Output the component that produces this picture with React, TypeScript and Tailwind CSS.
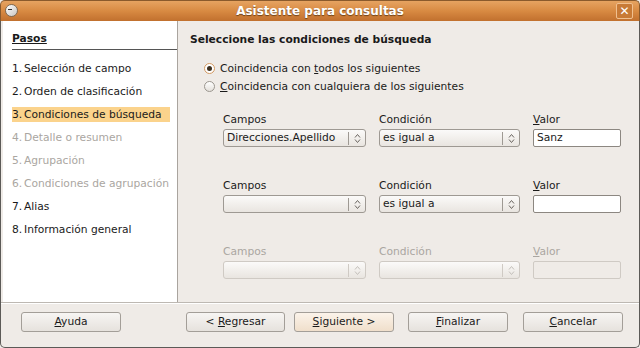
import React from "react";

const pasos = [
  { n: "1.", label: "Selección de campo", state: "normal" },
  { n: "2.", label: "Orden de clasificación", state: "normal" },
  { n: "3.", label: "Condiciones de búsqueda", state: "active" },
  { n: "4.", label: "Detalle o resumen", state: "disabled" },
  { n: "5.", label: "Agrupación", state: "disabled" },
  { n: "6.", label: "Condiciones de agrupación", state: "disabled" },
  { n: "7.", label: "Alias", state: "normal" },
  { n: "8.", label: "Información general", state: "normal" },
];

const condiciones = [
  { campo: "Direcciones.Apellido", cond: "es igual a", valor: "Sanz", disabled: false },
  { campo: "", cond: "es igual a", valor: "", disabled: false },
  { campo: "", cond: "", valor: "", disabled: true },
];

const Chevrons = ({ disabled }: { disabled?: boolean }) => (
  <svg width="7" height="11" viewBox="0 0 7 11" fill="none">
    <path
      d="M1 4.5 L3.5 1.5 L6 4.5 M1 6.5 L3.5 9.5 L6 6.5"
      stroke={disabled ? "#c4c0bb" : "#6b6661"}
      strokeWidth="1"
    />
  </svg>
);

const Select = ({ value, width, disabled }: { value: string; width: string; disabled?: boolean }) => (
  <div
    className={`${width} flex h-[18px] items-center rounded-[3px] border bg-gradient-to-b from-[#fbfaf9] to-[#e9e5e0] ${
      disabled ? "border-[#cfcac4]" : "border-[#9e9993]"
    }`}
  >
    <span className="flex-1 overflow-hidden whitespace-nowrap pl-[3px] leading-[16px]">{value}</span>
    <span className={`h-[13px] w-px ${disabled ? "bg-[#cfcac4]" : "bg-[#9e9993]"}`} />
    <span className="flex w-[16px] justify-center">
      <Chevrons disabled={disabled} />
    </span>
  </div>
);

const Button = ({ children, hot, w = "w-[100px]" }: { children: React.ReactNode; hot?: boolean; w?: string }) => (
  <button
    className={`${w} flex h-[20px] shrink-0 items-center justify-center rounded-[3px] border border-[#a39e98] bg-gradient-to-b text-[#1a1a1a] ${
      hot ? "from-[#fbf3ea] to-[#f0dfcb]" : "from-[#f7f5f3] to-[#e6e2dd]"
    }`}
  >
    <span className="whitespace-pre leading-[16px]">{children}</span>
  </button>
);

export default function App() {
  return (
    <div
      className="flex h-[348px] w-[640px] flex-col overflow-hidden bg-[#efebe7] text-[10.7px] text-[#1a1a1a]"
      style={{ fontFamily: '"DejaVu Sans", Verdana, sans-serif' }}
    >
      {/* barra de título */}
      <div className="relative flex h-[21px] shrink-0 items-center justify-center rounded-t-[5px] border border-b-0 border-[#8a5a2c] bg-gradient-to-b from-[#e6a361] via-[#d88a42] to-[#c1702e]">
        <div className="absolute left-[4px] top-[3px] h-[13px] w-[13px] rounded-full border border-[#7d6a55] bg-gradient-to-br from-white to-[#c9c5c0]">
          <div className="ml-[2px] mt-[4px] h-px w-[4px] bg-[#333]" />
        </div>
        <span className="text-[12px] font-bold text-white [text-shadow:0_1px_1px_#6e4218]">
          Asistente para consultas
        </span>
        <div className="absolute right-[6px] top-[2px] flex h-[16px] w-[17px] items-center justify-center rounded-[2px] border border-[#f0c090] bg-[#c87a36]">
          <span className="text-[12px] font-bold leading-none text-white">✕</span>
        </div>
      </div>

      <div className="flex flex-1 flex-col rounded-b-[5px] border border-t-0 border-[#5c5a57]">
        <div className="flex h-[282px] shrink-0 border-b border-[#bdb8b2] pl-[2px]">
          {/* Pasos */}
          <div className="w-[175px] shrink-0 border-r border-[#a9a49e] bg-white">
            <div className="ml-[9px] mt-[10px] border-b border-[#555] pb-[2px]">
              <span className="font-bold underline">Pasos</span>
            </div>
            <div className="ml-[9px] mt-[11px] flex flex-col">
              {pasos.map((p) => (
                <div
                  key={p.n}
                  className={`mb-[8px] flex h-[15px] w-[158px] items-center whitespace-nowrap ${
                    p.state === "active" ? "bg-[#fbd38c]" : ""
                  } ${p.state === "disabled" ? "text-[#aaa6a1]" : ""}`}
                >
                  <span className="w-[12px] shrink-0">{p.n}</span>
                  <span>{p.label}</span>
                </div>
              ))}
            </div>
          </div>

          {/* Condiciones */}
          <div className="flex-1 pl-[12px]">
            <div className="mt-[11px] font-bold">Seleccione las condiciones de búsqueda</div>
            <div className="ml-[14px] mt-[14px] flex flex-col gap-[5px]">
              <label className="flex h-[13px] items-center gap-[5px]">
                <span className="flex h-[11px] w-[11px] items-center justify-center rounded-full border border-[#d49a62] bg-white">
                  <span className="h-[5px] w-[5px] rounded-full bg-[#3d3020]" />
                </span>
                <span>
                  Coincidencia con <span className="underline">t</span>odos los siguientes
                </span>
              </label>
              <label className="flex h-[13px] items-center gap-[5px]">
                <span className="h-[11px] w-[11px] rounded-full border border-[#9b968f] bg-gradient-to-b from-white to-[#e4e0db]" />
                <span>
                  <span className="underline">C</span>oincidencia con cualquiera de los siguientes
                </span>
              </label>
            </div>

            <div className="ml-[33px] mt-[19px] flex flex-col gap-[31px]">
              {condiciones.map((c, i) => (
                <div key={i} className={`flex gap-[13px] ${c.disabled ? "text-[#aaa6a1]" : ""}`}>
                  <div className="flex flex-col gap-[3px]">
                    <span className="h-[14px]">Campos</span>
                    <Select value={c.campo} width="w-[143px]" disabled={c.disabled} />
                  </div>
                  <div className="flex flex-col gap-[3px]">
                    <span className="h-[14px]">Condición</span>
                    <Select value={c.cond} width="w-[141px]" disabled={c.disabled} />
                  </div>
                  <div className="flex flex-col gap-[3px]">
                    <span className="h-[14px]">
                      <span className="underline">V</span>alor
                    </span>
                    <div
                      className={`flex h-[18px] w-[88px] items-center rounded-[2px] border pl-[3px] ${
                        c.disabled ? "border-[#cfcac4] bg-[#efebe7]" : "border-[#8c8781] bg-white"
                      }`}
                    >
                      {c.valor}
                    </div>
                  </div>
                </div>
              ))}
            </div>
          </div>
        </div>
        <div className="h-px bg-white" />

        {/* botones */}
        <div className="mt-[8px] flex pl-[20px]">
          <Button>
            <span className="underline">A</span>yuda
          </Button>
          <div className="ml-[65px] flex gap-[9px]">
            <Button w="w-[99px]">
              {"< "}
              <span className="underline">R</span>egresar
            </Button>
            <Button hot>
              <span className="underline">S</span>
              {"iguiente >"}
            </Button>
          </div>
          <div className="ml-[14px] flex gap-[15px]">
            <Button>
              <span className="underline">F</span>inalizar
            </Button>
            <Button>
              <span className="underline">C</span>ancelar
            </Button>
          </div>
        </div>
      </div>
    </div>
  );
}
